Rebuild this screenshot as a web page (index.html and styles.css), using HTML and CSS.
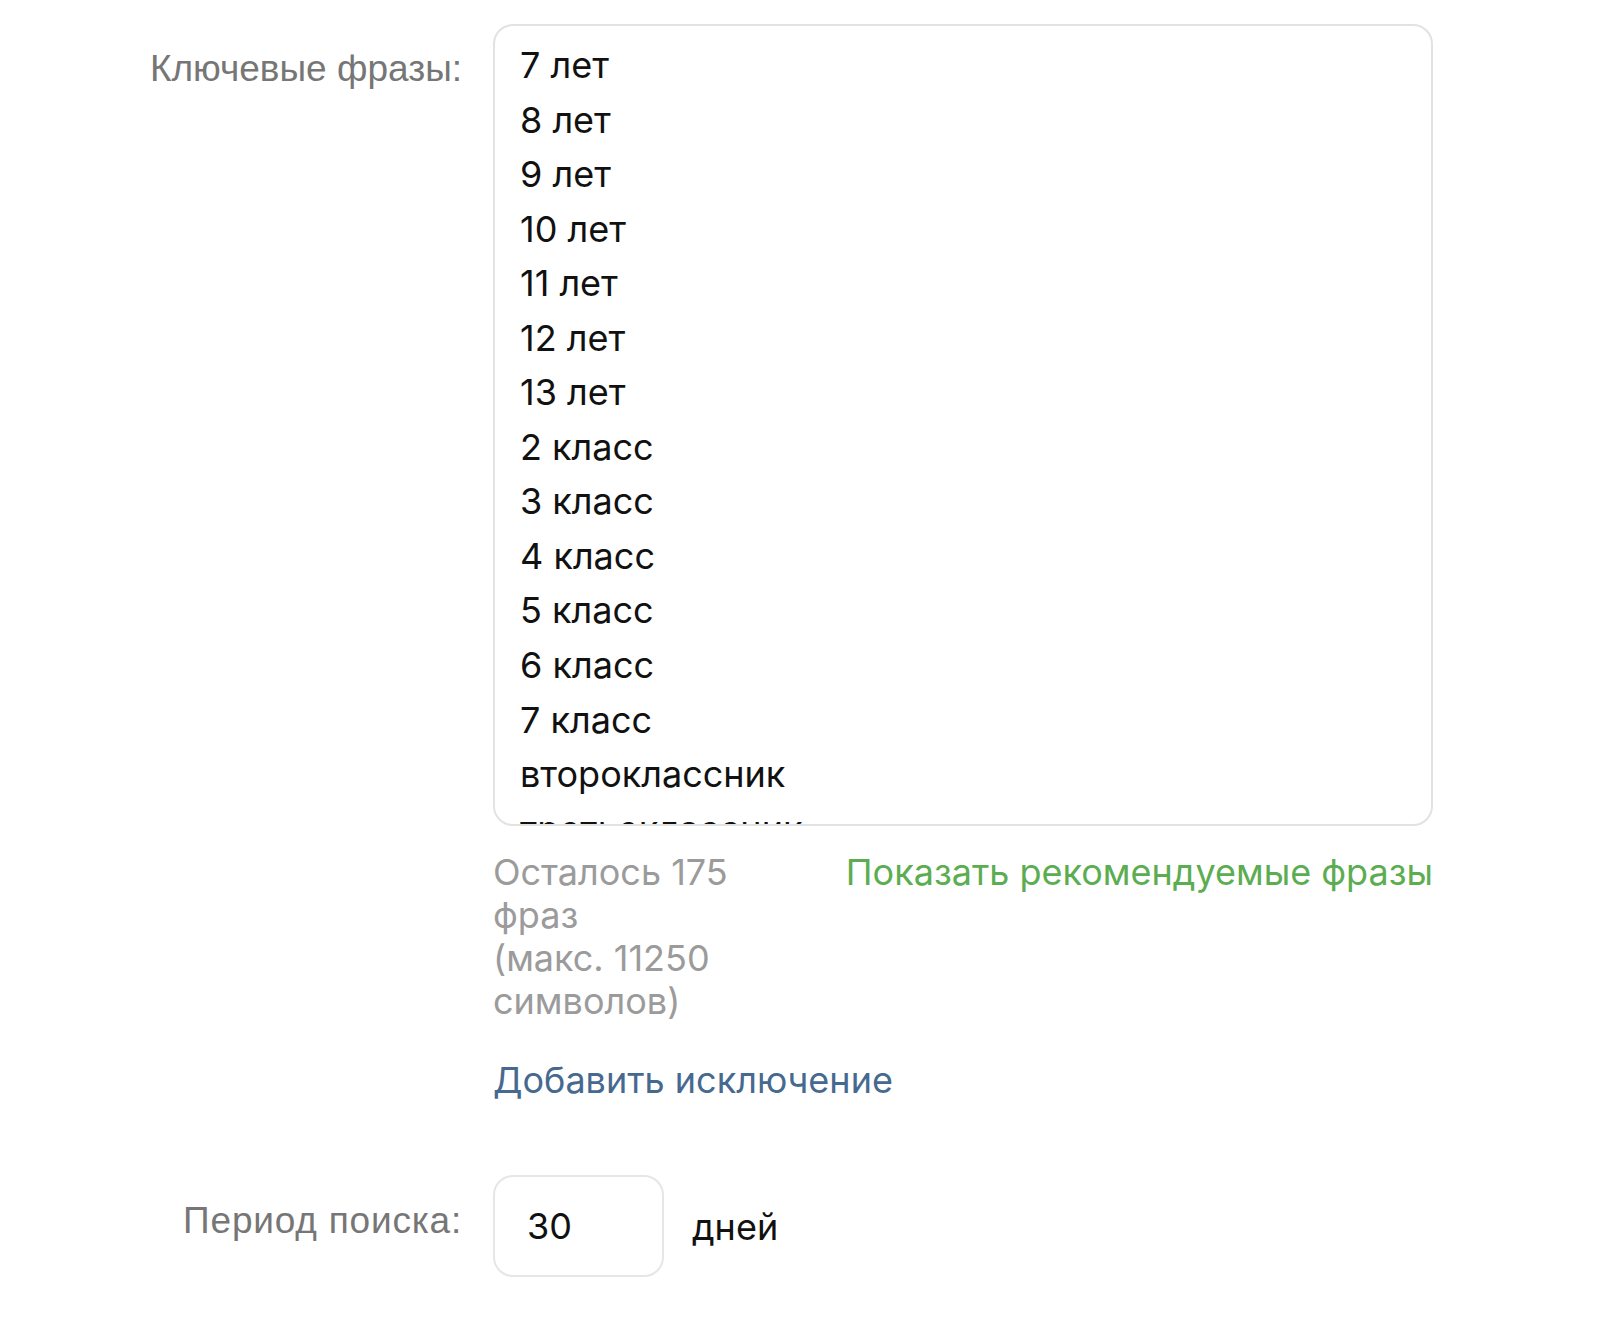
FILE: index.html
```html
<!DOCTYPE html>
<html lang="ru">
<head>
<meta charset="utf-8">
<title>Ключевые фразы</title>
<link rel="stylesheet" href="styles.css">
</head>
<body>
<div class="form">
  <div class="row row-keywords">
    <div class="label label-keywords">Ключевые фразы:</div>
    <div class="field">
      <div class="textarea">
        <div class="line">7 лет</div>
        <div class="line">8 лет</div>
        <div class="line">9 лет</div>
        <div class="line">10 лет</div>
        <div class="line">11 лет</div>
        <div class="line">12 лет</div>
        <div class="line">13 лет</div>
        <div class="line">2 класс</div>
        <div class="line">3 класс</div>
        <div class="line">4 класс</div>
        <div class="line">5 класс</div>
        <div class="line">6 класс</div>
        <div class="line">7 класс</div>
        <div class="line">второклассник</div>
        <div class="line">третьеклассник</div>
        <div class="line">четвероклассник</div>
      </div>
      <div class="meta">
        <div class="remaining">Осталось 175 фраз<br>(макс. 11250 символов)</div>
        <a class="suggest" href="#">Показать рекомендуемые фразы</a>
      </div>
      <a class="exclude" href="#">Добавить исключение</a>
    </div>
  </div>
  <div class="row row-period">
    <div class="label label-period">Период поиска:</div>
    <div class="period-field">
      <div class="input">30</div>
      <span class="unit">дней</span>
    </div>
  </div>
</div>
</body>
</html>
```

FILE: styles.css
```css
html, body {
  margin: 0;
  padding: 0;
  background: #ffffff;
}

body {
  font-family: Inter, "Liberation Sans", Arial, sans-serif;
  font-size: 36px;
  line-height: 43px;
  color: #111111;
}

.form {
  display: flex;
  flex-direction: column;
  padding-top: 24px;
}

.row {
  display: flex;
  align-items: flex-start;
  gap: 31px;
}

.label {
  width: 462px;
  flex: 0 0 462px;
  text-align: right;
  color: #767676;
  white-space: nowrap;
  font-family: "Liberation Sans", Arial, sans-serif;
  font-size: 37px;
}

.label-keywords {
  padding-top: 23px;
}

.field {
  width: 940px;
  display: flex;
  flex-direction: column;
}

.textarea {
  box-sizing: border-box;
  height: 802px;
  border: 2px solid #e2e2e2;
  border-radius: 20px;
  padding: 12px 25px 0 25px;
  overflow: hidden;
  line-height: 54.55px;
  color: #111111;
}

.meta {
  display: flex;
  justify-content: space-between;
  align-items: flex-start;
  margin-top: 25px;
}

.remaining {
  width: 290px;
  color: #9b9b9b;
}

.suggest {
  color: #5cad52;
  text-decoration: none;
  white-space: nowrap;
}

.exclude {
  align-self: flex-start;
  margin-top: 36px;
  color: #46698f;
  text-decoration: none;
}

.row-period {
  margin-top: 73px;
}

.label-period {
  padding-top: 24px;
  letter-spacing: 0.8px;
}

.period-field {
  display: flex;
  align-items: center;
  gap: 28px;
}

.input {
  box-sizing: border-box;
  width: 171px;
  height: 102px;
  border: 2px solid #e6e6e6;
  border-radius: 20px;
  padding-left: 32px;
  display: flex;
  align-items: center;
  color: #111111;
}

.unit {
  color: #111111;
  padding-top: 3px;
}
```
